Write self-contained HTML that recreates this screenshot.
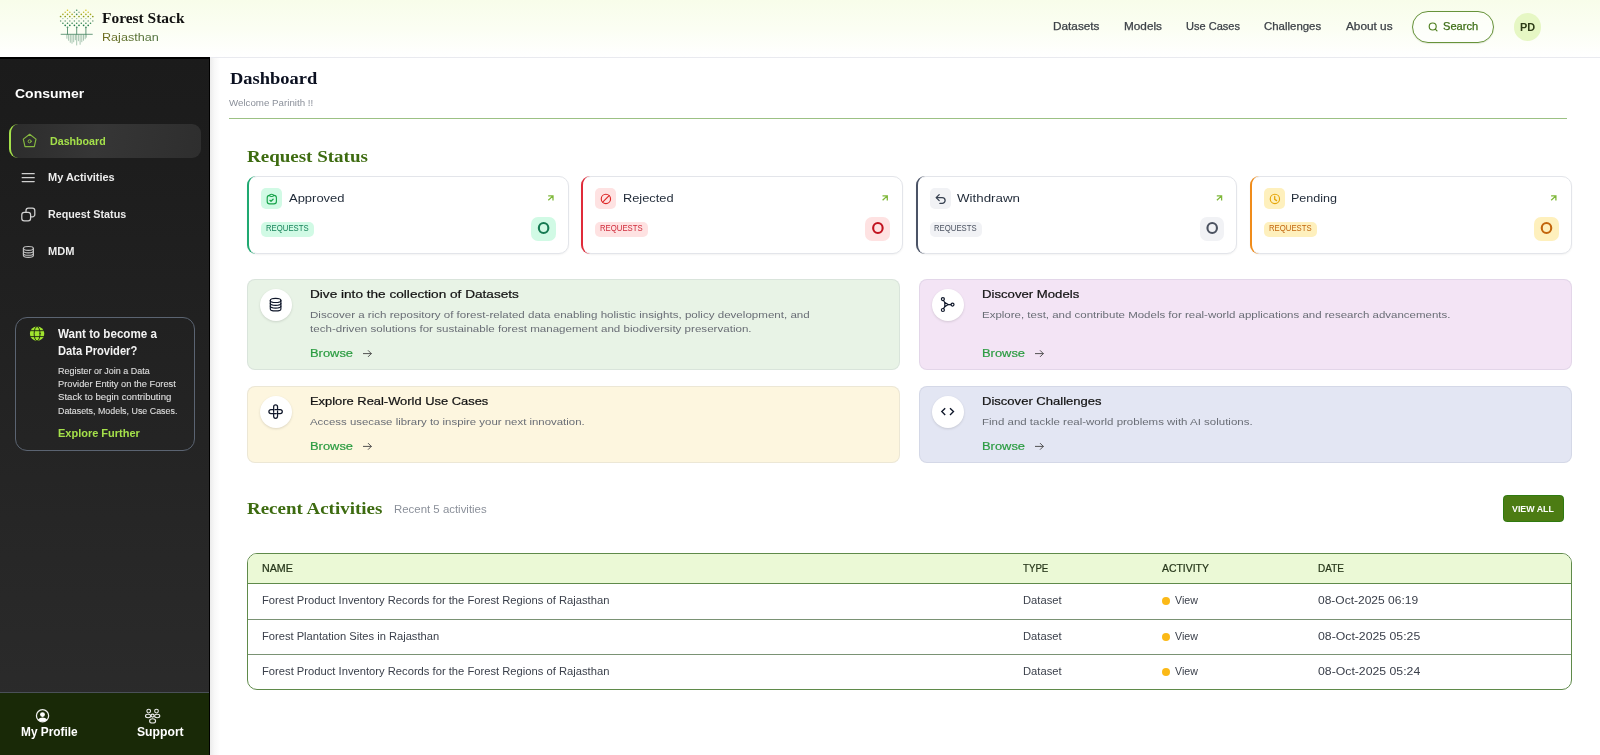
<!DOCTYPE html><html lang="en"><head>
<meta charset="utf-8">
<title>Forest Stack Rajasthan - Dashboard</title>
<style>
*{box-sizing:border-box;margin:0;padding:0}
html,body{width:1600px;height:755px;overflow:hidden;background:#fff}
body{font-family:"Liberation Sans",sans-serif;color:#1f2937;position:relative}
.abs{position:absolute}
.t{position:absolute;white-space:nowrap;line-height:1}
.serif{font-family:"Liberation Serif",serif;font-weight:700}
.b{font-weight:700}
.m{-webkit-text-stroke:.25px currentColor}
svg{position:absolute;overflow:visible}

/* header */
#hdr{position:absolute;left:0;top:0;width:1600px;height:58px;background:linear-gradient(180deg,#f8fdea 0%,#fbfef3 50%,#ffffff 100%);border-bottom:1px solid #e9eaef}
.nav{color:#3d4248}
#search{position:absolute;left:1412px;top:11px;width:82px;height:32px;border:1px solid #67933a;border-radius:16px;background:rgba(255,255,255,.55);box-shadow:0 .5px 1px rgba(80,110,40,.25)}
#avatar{position:absolute;left:1513.5px;top:13px;width:27.5px;height:27.5px;border-radius:14px;background:#e6f7c4}

/* sidebar */
#side{position:absolute;left:0;top:57px;width:210px;height:698px;box-shadow:inset 0 1px 0 #000;background:linear-gradient(180deg,#1b1b1b 0%,#1d1d1d 15%,#2c2c2c 100%);border-top:1px solid #000;border-right:1px solid #000}
#sideshadow{position:absolute;left:210px;top:58px;width:10px;height:697px;background:linear-gradient(90deg,#ececec 0%,#f8f8f8 45%,#fff 100%)}
#act{position:absolute;left:9px;top:124px;width:192px;height:34px;border-radius:9px;background:linear-gradient(100deg,#2c2c2c 0%,#363636 45%,#2e2e2e 100%);border-left:2px solid #a4e04a}
.sn{font-weight:700;color:#ececec}
#prov{position:absolute;left:15px;top:317px;width:180px;height:134px;border:1px solid #5b6472;border-radius:12px}
#foot{position:absolute;left:0;top:692px;width:209px;height:63px;background:#192907;border-top:1.5px solid #4a5058}

/* main */
.card{position:absolute;top:176px;width:321.5px;height:77.5px;background:#fff;border:1px solid #e3e5ea;border-radius:10px;box-shadow:0 1px 2px rgba(0,0,0,.05)}
.card .bar{position:absolute;left:-1px;top:-1px;width:12px;height:77.5px;border-left:2.5px solid;border-radius:9px 0 0 9px}
.ico{position:absolute;left:13px;top:11px;width:21px;height:21px;border-radius:5px}
.pill{position:absolute;left:13px;top:44.600px;height:15px;width:52.5px;border-radius:5px}
.num{position:absolute;left:283.100px;top:39.900px;width:24.700px;height:24px;border-radius:7px}
.info{position:absolute;border-radius:8px;border:1px solid rgba(90,100,130,.1)}
.circ{position:absolute;width:32px;height:32px;border-radius:16px;background:#fff;box-shadow:0 1px 2.5px rgba(0,0,0,.13)}
.it{color:#111;-webkit-text-stroke:.22px #111}
.id{color:#696d75}
.br{color:#2a9b40;-webkit-text-stroke:.2px #2a9b40}
.th{color:#26361a;-webkit-text-stroke:.22px #26361a}
.td{color:#3b404b}
</style>
</head>
<body>

<!-- HEADER -->
<div id="hdr"></div>
<div class="t serif" style="color: rgb(17, 17, 17); left: 102.1px; font-size: 15.3px; top: 10px; transform: scaleX(1.01); transform-origin: 0px 0px;">Forest Stack</div>
<div class="t" style="color: transparent; background: linear-gradient(90deg, rgb(111, 108, 28) 0%, rgb(90, 110, 44) 45%, rgb(76, 111, 60) 100%) text; left: 101.6px; font-size: 11.5px; top: 32px; transform: scaleX(1.096); transform-origin: 0px 0px;">Rajasthan</div>
<div class="t nav m" style="left: 1053.2px; font-size: 10.3px; top: 22px; transform: scaleX(1.144); transform-origin: 0px 0px;">Datasets</div>
<div class="t nav m" style="left: 1124px; font-size: 10.3px; top: 22px; transform: scaleX(1.144); transform-origin: 0px 0px;">Models</div>
<div class="t nav m" style="left: 1185.7px; font-size: 10.3px; top: 22px; transform: scaleX(1.072); transform-origin: 0px 0px;">Use Cases</div>
<div class="t nav m" style="left: 1264px; font-size: 10.3px; top: 22px; transform: scaleX(1.11); transform-origin: 0px 0px;">Challenges</div>
<div class="t nav m" style="left: 1345.6px; font-size: 10.3px; top: 22px; transform: scaleX(1.146); transform-origin: 0px 0px;">About us</div>
<div id="search"></div>
<div class="t m" style="color: rgb(63, 111, 23); left: 1442.5px; font-size: 10.3px; top: 22px; transform: scaleX(1.079); transform-origin: 0px 0px;">Search</div>
<div id="avatar"></div>
<div class="t b" style="color: rgb(45, 59, 22); left: 1519.5px; font-size: 10.6px; top: 22px; transform: scaleX(1.029); transform-origin: 0px 0px;">PD</div>

<!-- SIDEBAR -->
<div id="side"></div>
<div id="sideshadow"></div>
<div class="t b" style="color: rgb(255, 255, 255); left: 15.2px; font-size: 13.4px; top: 87px; transform: scaleX(1.045); transform-origin: 0px 0px;">Consumer</div>
<div id="act"></div>
<div class="t sn" style="color: rgb(164, 224, 74); left: 49.5px; font-size: 11.4px; top: 136px; transform: scaleX(0.936); transform-origin: 0px 0px;">Dashboard</div>
<div class="t sn" style="left: 48px; font-size: 11.4px; top: 172px; transform: scaleX(0.964); transform-origin: 0px 0px;">My Activities</div>
<div class="t sn" style="left: 48px; font-size: 11.4px; top: 209px; transform: scaleX(0.943); transform-origin: 0px 0px;">Request Status</div>
<div class="t sn" style="left: 48px; font-size: 11.4px; top: 246px; transform: scaleX(0.973); transform-origin: 0px 0px;">MDM</div>
<div id="prov"></div>
<div class="t b" style="color: rgb(243, 243, 243); left: 58.1px; font-size: 12.3px; top: 328px; transform: scaleX(0.944); transform-origin: 0px 0px;">Want to become a</div>
<div class="t b" style="color: rgb(243, 243, 243); left: 58.1px; font-size: 12.3px; top: 345px; transform: scaleX(0.906); transform-origin: 0px 0px;">Data Provider?</div>
<div class="t" style="color: rgb(222, 222, 222); -webkit-text-stroke: 0.12px rgb(222, 222, 222); left: 58.1px; font-size: 9.7px; top: 366px; transform: scaleX(0.926); transform-origin: 0px 0px;">Register or Join a Data</div>
<div class="t" style="color: rgb(222, 222, 222); -webkit-text-stroke: 0.12px rgb(222, 222, 222); left: 58.1px; font-size: 9.7px; top: 379px; transform: scaleX(0.96); transform-origin: 0px 0px;">Provider Entity on the Forest</div>
<div class="t" style="color: rgb(222, 222, 222); -webkit-text-stroke: 0.12px rgb(222, 222, 222); left: 58.1px; font-size: 9.7px; top: 392px; transform: scaleX(0.993); transform-origin: 0px 0px;">Stack to begin contributing</div>
<div class="t" style="color: rgb(222, 222, 222); -webkit-text-stroke: 0.12px rgb(222, 222, 222); left: 58.1px; font-size: 9.7px; top: 406px; transform: scaleX(0.916); transform-origin: 0px 0px;">Datasets, Models, Use Cases.</div>
<div class="t b" style="color: rgb(164, 224, 74); left: 58.1px; font-size: 11.7px; top: 427px; transform: scaleX(0.94); transform-origin: 0px 0px;">Explore Further</div>
<div id="foot"></div>
<div class="t b" style="color: rgb(255, 255, 255); left: 21.3px; font-size: 12px; top: 726px; transform: scaleX(0.988); transform-origin: 0px 0px;">My Profile</div>
<div class="t b" style="color: rgb(255, 255, 255); left: 136.9px; font-size: 12px; top: 726px; transform: scaleX(1.015); transform-origin: 0px 0px;">Support</div>

<!-- MAIN -->
<div class="t serif" style="color: rgb(11, 16, 32); left: 229.5px; font-size: 17.6px; top: 70px; transform: scaleX(1.05); transform-origin: 0px 0px;">Dashboard</div>
<div class="t" style="color: rgb(139, 144, 154); left: 229.2px; font-size: 9.7px; top: 98px; transform: scaleX(1.005); transform-origin: 0px 0px;">Welcome Parinith !!</div>
<div class="abs" style="left:229px;top:118px;width:1338px;height:1px;background:#9cc184"></div>
<div class="t serif" style="color: rgb(61, 107, 16); left: 247px; font-size: 17.6px; top: 148px; transform: scaleX(1.08); transform-origin: 0px 0px;">Request Status</div>

<div class="card" style="left:247.1px"><div class="bar" style="border-color:#1fa971"></div><div class="ico" style="background:#d1fae5"></div><div class="pill" style="background:#d1fae5"></div><div class="num" style="background:#d1fae5"></div></div>
<div class="card" style="left:581.4px"><div class="bar" style="border-color:#e02b3a"></div><div class="ico" style="background:#fee2e2"></div><div class="pill" style="background:#fee2e2"></div><div class="num" style="background:#fee2e2"></div></div>
<div class="card" style="left:915.7px"><div class="bar" style="border-color:#4b5366"></div><div class="ico" style="background:#f1f2f5"></div><div class="pill" style="background:#f1f2f5"></div><div class="num" style="background:#f1f2f5"></div></div>
<div class="card" style="left:1250px"><div class="bar" style="border-color:#f08c1a"></div><div class="ico" style="background:#fef0bd"></div><div class="pill" style="background:#fef0bd"></div><div class="num" style="background:#fef0bd"></div></div>

<div class="t" style="color: rgb(31, 41, 55); left: 288.7px; font-size: 11.67px; top: 192px; transform: scaleX(1.113); transform-origin: 0px 0px;">Approved</div>
<div class="t" style="color: rgb(31, 41, 55); left: 622.8px; font-size: 11.67px; top: 192px; transform: scaleX(1.098); transform-origin: 0px 0px;">Rejected</div>
<div class="t" style="color: rgb(31, 41, 55); left: 957.1px; font-size: 11.67px; top: 192px; transform: scaleX(1.145); transform-origin: 0px 0px;">Withdrawn</div>
<div class="t" style="color: rgb(31, 41, 55); left: 1291.3px; font-size: 11.67px; top: 192px; transform: scaleX(1.076); transform-origin: 0px 0px;">Pending</div>

<div class="t" style="color: rgb(23, 131, 90); left: 265.6px; font-size: 8.4px; top: 224px; transform: scaleX(0.925); transform-origin: 0px 0px;">REQUESTS</div>
<div class="t" style="color: rgb(207, 42, 58); left: 600px; font-size: 8.4px; top: 224px; transform: scaleX(0.925); transform-origin: 0px 0px;">REQUESTS</div>
<div class="t" style="color: rgb(75, 82, 96); left: 934.3px; font-size: 8.4px; top: 224px; transform: scaleX(0.925); transform-origin: 0px 0px;">REQUESTS</div>
<div class="t" style="color: rgb(194, 101, 12); left: 1268.6px; font-size: 8.4px; top: 224px; transform: scaleX(0.925); transform-origin: 0px 0px;">REQUESTS</div>


<div class="info" style="left:247px;top:279px;width:652.5px;height:91.300px;background:#e8f3e6"></div>
<div class="info" style="left:919px;top:279px;width:652.700px;height:91.300px;background:#f3e4f5"></div>
<div class="info" style="left:247px;top:385.800px;width:652.500px;height:77px;background:#fdf6df"></div>
<div class="info" style="left:919px;top:385.800px;width:652.700px;height:77px;background:#e3e6f3"></div>
<div class="circ" style="left:259.5px;top:288.5px"></div>
<div class="circ" style="left:931.5px;top:288.5px"></div>
<div class="circ" style="left:259.5px;top:395.5px"></div>
<div class="circ" style="left:931.5px;top:395.5px"></div>

<div class="t it" style="left: 310.2px; font-size: 11.67px; top: 288px; transform: scaleX(1.168); transform-origin: 0px 0px;">Dive into the collection of Datasets</div>
<div class="t id" style="left: 310.2px; font-size: 9.8px; top: 310px; transform: scaleX(1.181); transform-origin: 0px 0px;">Discover a rich repository of forest-related data enabling holistic insights, policy development, and</div>
<div class="t id" style="left: 310.2px; font-size: 9.8px; top: 324px; transform: scaleX(1.182); transform-origin: 0px 0px;">tech-driven solutions for sustainable forest management and biodiversity preservation.</div>
<div class="t br" style="left: 310.2px; font-size: 11.67px; top: 347px; transform: scaleX(1.107); transform-origin: 0px 0px;">Browse</div>

<div class="t it" style="left: 982.2px; font-size: 11.67px; top: 288px; transform: scaleX(1.129); transform-origin: 0px 0px;">Discover Models</div>
<div class="t id" style="left: 982.2px; font-size: 9.8px; top: 310px; transform: scaleX(1.172); transform-origin: 0px 0px;">Explore, test, and contribute Models for real-world applications and research advancements.</div>
<div class="t br" style="left: 982.2px; font-size: 11.67px; top: 347px; transform: scaleX(1.107); transform-origin: 0px 0px;">Browse</div>

<div class="t it" style="left: 310.2px; font-size: 11.67px; top: 395px; transform: scaleX(1.107); transform-origin: 0px 0px;">Explore Real-World Use Cases</div>
<div class="t id" style="left: 310.2px; font-size: 9.8px; top: 417px; transform: scaleX(1.165); transform-origin: 0px 0px;">Access usecase library to inspire your next innovation.</div>
<div class="t br" style="left: 310.2px; font-size: 11.67px; top: 440px; transform: scaleX(1.107); transform-origin: 0px 0px;">Browse</div>

<div class="t it" style="left: 982.2px; font-size: 11.67px; top: 395px; transform: scaleX(1.119); transform-origin: 0px 0px;">Discover Challenges</div>
<div class="t id" style="left: 982.2px; font-size: 9.8px; top: 417px; transform: scaleX(1.172); transform-origin: 0px 0px;">Find and tackle real-world problems with AI solutions.</div>
<div class="t br" style="left: 982.2px; font-size: 11.67px; top: 440px; transform: scaleX(1.107); transform-origin: 0px 0px;">Browse</div>

<div class="t serif" style="color: rgb(61, 107, 16); left: 247.3px; font-size: 17.6px; top: 500px; transform: scaleX(1.078); transform-origin: 0px 0px;">Recent Activities</div>
<div class="t" style="color: rgb(139, 144, 154); left: 393.6px; font-size: 10.2px; top: 505px; transform: scaleX(1.121); transform-origin: 0px 0px;">Recent 5 activities</div>
<div class="abs" style="left:1502.600px;top:495px;width:61.500px;height:27.100px;background:#4c7c13;border-radius:3.800px;border:1px solid #2f7a10"></div>
<div class="t b" style="color: rgb(255, 255, 255); left: 1512.4px; font-size: 9.4px; top: 504px; transform: scaleX(0.941); transform-origin: 0px 0px;">VIEW ALL</div>

<div class="abs" id="tbl" style="left:247px;top:552.5px;width:1324.5px;height:137.5px;border:1px solid #5f8a4a;border-radius:10px;overflow:hidden;background:#fff">
  <div class="abs" style="left:0;top:0;width:1325px;height:30.5px;background:#ebf9d6;border-bottom:1px solid #5f8a4a"></div>
  <div class="abs" style="left:0;top:65px;width:1325px;height:1px;background:#7a9274"></div>
  <div class="abs" style="left:0;top:100.5px;width:1325px;height:1px;background:#7a9274"></div>
</div>
<div class="t th" style="left: 262.3px; font-size: 10.4px; top: 564px; transform: scaleX(1.03); transform-origin: 0px 0px;">NAME</div>
<div class="t th" style="left: 1022.6px; font-size: 10.4px; top: 564px; transform: scaleX(0.934); transform-origin: 0px 0px;">TYPE</div>
<div class="t th" style="left: 1162.3px; font-size: 10.4px; top: 564px; transform: scaleX(1.004); transform-origin: 0px 0px;">ACTIVITY</div>
<div class="t th" style="left: 1318.4px; font-size: 10.4px; top: 564px; transform: scaleX(0.963); transform-origin: 0px 0px;">DATE</div>

<div class="t td" style="left: 262.3px; font-size: 10px; top: 596px; transform: scaleX(1.12); transform-origin: 0px 0px;">Forest Product Inventory Records for the Forest Regions of Rajasthan</div>
<div class="t td" style="left: 1022.6px; font-size: 10px; top: 596px; transform: scaleX(1.119); transform-origin: 0px 0px;">Dataset</div>
<div class="abs" style="left:1162.2px;top:597.2px;width:8.2px;height:8.2px;border-radius:5px;background:#fbb917"></div>
<div class="t td" style="left: 1174.8px; font-size: 10px; top: 596px; transform: scaleX(1.064); transform-origin: 0px 0px;">View</div>
<div class="t td" style="left: 1318.4px; font-size: 10px; top: 596px; transform: scaleX(1.2); transform-origin: 0px 0px;">08-Oct-2025 06:19</div>

<div class="t td" style="left: 262.3px; font-size: 10px; top: 632px; transform: scaleX(1.114); transform-origin: 0px 0px;">Forest Plantation Sites in Rajasthan</div>
<div class="t td" style="left: 1022.6px; font-size: 10px; top: 632px; transform: scaleX(1.119); transform-origin: 0px 0px;">Dataset</div>
<div class="abs" style="left:1162.2px;top:632.8px;width:8.2px;height:8.2px;border-radius:5px;background:#fbb917"></div>
<div class="t td" style="left: 1174.8px; font-size: 10px; top: 632px; transform: scaleX(1.064); transform-origin: 0px 0px;">View</div>
<div class="t td" style="left: 1318.4px; font-size: 10px; top: 632px; transform: scaleX(1.226); transform-origin: 0px 0px;">08-Oct-2025 05:25</div>

<div class="t td" style="left: 262.3px; font-size: 10px; top: 667px; transform: scaleX(1.12); transform-origin: 0px 0px;">Forest Product Inventory Records for the Forest Regions of Rajasthan</div>
<div class="t td" style="left: 1022.6px; font-size: 10px; top: 667px; transform: scaleX(1.119); transform-origin: 0px 0px;">Dataset</div>
<div class="abs" style="left:1162.2px;top:668px;width:8.2px;height:8.2px;border-radius:5px;background:#fbb917"></div>
<div class="t td" style="left: 1174.8px; font-size: 10px; top: 667px; transform: scaleX(1.064); transform-origin: 0px 0px;">View</div>
<div class="t td" style="left: 1318.4px; font-size: 10px; top: 667px; transform: scaleX(1.226); transform-origin: 0px 0px;">08-Oct-2025 05:24</div>

<svg id="icons" width="1600" height="755" viewBox="0 0 1600 755" style="left:0;top:0" fill="none" stroke-linecap="round" stroke-linejoin="round">
<g><circle cx="67.5" cy="10.3" r="0.8" fill="#d8c41c"></circle><circle cx="76.7" cy="10.3" r="0.8" fill="#3f8a62"></circle><circle cx="85.9" cy="10.3" r="0.8" fill="#d8c41c"></circle><circle cx="65.2" cy="12.2" r="0.75" fill="#c4b82c"></circle><circle cx="69.8" cy="12.2" r="0.75" fill="#c4b82c"></circle><circle cx="74.4" cy="12.2" r="0.75" fill="#7aa28a"></circle><circle cx="79.0" cy="12.2" r="0.75" fill="#7aa28a"></circle><circle cx="83.6" cy="12.2" r="0.75" fill="#c4b82c"></circle><circle cx="88.2" cy="12.2" r="0.75" fill="#c4b82c"></circle><circle cx="62.9" cy="14.4" r="0.8" fill="#a6a81e"></circle><circle cx="67.5" cy="14.4" r="0.8" fill="#a6a81e"></circle><circle cx="72.1" cy="14.4" r="0.8" fill="#a6a81e"></circle><circle cx="76.7" cy="14.4" r="0.8" fill="#3f8a62"></circle><circle cx="81.3" cy="14.4" r="0.8" fill="#a6a81e"></circle><circle cx="85.9" cy="14.4" r="0.8" fill="#a6a81e"></circle><circle cx="90.5" cy="14.4" r="0.8" fill="#a6a81e"></circle><circle cx="60.6" cy="16.5" r="0.85" fill="#8a9c18"></circle><circle cx="65.2" cy="16.5" r="0.85" fill="#8a9c18"></circle><circle cx="69.8" cy="16.5" r="0.85" fill="#8a9c18"></circle><circle cx="74.4" cy="16.5" r="0.85" fill="#8a9c18"></circle><circle cx="79.0" cy="16.5" r="0.85" fill="#8a9c18"></circle><circle cx="83.6" cy="16.5" r="0.85" fill="#8a9c18"></circle><circle cx="88.2" cy="16.5" r="0.85" fill="#8a9c18"></circle><circle cx="92.8" cy="16.5" r="0.85" fill="#8a9c18"></circle><circle cx="62.9" cy="18.6" r="0.65" fill="#8fb09a"></circle><circle cx="67.5" cy="18.6" r="0.65" fill="#8fb09a"></circle><circle cx="72.1" cy="18.6" r="0.65" fill="#8fb09a"></circle><circle cx="76.7" cy="18.6" r="0.65" fill="#8fb09a"></circle><circle cx="81.3" cy="18.6" r="0.65" fill="#8fb09a"></circle><circle cx="85.9" cy="18.6" r="0.65" fill="#8fb09a"></circle><circle cx="90.5" cy="18.6" r="0.65" fill="#8fb09a"></circle><circle cx="60.6" cy="20.9" r="0.75" fill="#6a987a"></circle><circle cx="65.2" cy="20.9" r="0.75" fill="#6a987a"></circle><circle cx="69.8" cy="20.9" r="0.75" fill="#6a987a"></circle><circle cx="74.4" cy="20.9" r="0.75" fill="#6a987a"></circle><circle cx="79.0" cy="20.9" r="0.75" fill="#6a987a"></circle><circle cx="83.6" cy="20.9" r="0.75" fill="#6a987a"></circle><circle cx="88.2" cy="20.9" r="0.75" fill="#6a987a"></circle><circle cx="92.8" cy="20.9" r="0.75" fill="#6a987a"></circle><circle cx="62.9" cy="23.3" r="0.8" fill="#2f8452"></circle><circle cx="67.5" cy="23.3" r="0.8" fill="#2f8452"></circle><circle cx="72.1" cy="23.3" r="0.8" fill="#2f8452"></circle><circle cx="76.7" cy="23.3" r="0.8" fill="#2f8452"></circle><circle cx="81.3" cy="23.3" r="0.8" fill="#2f8452"></circle><circle cx="85.9" cy="23.3" r="0.8" fill="#2f8452"></circle><circle cx="90.5" cy="23.3" r="0.8" fill="#2f8452"></circle><circle cx="65.2" cy="25.3" r="0.85" fill="#1f7c4a"></circle><circle cx="69.8" cy="25.3" r="0.85" fill="#1f7c4a"></circle><circle cx="74.4" cy="25.3" r="0.85" fill="#1f7c4a"></circle><circle cx="79.0" cy="25.3" r="0.85" fill="#1f7c4a"></circle><circle cx="83.6" cy="25.3" r="0.85" fill="#1f7c4a"></circle><circle cx="88.2" cy="25.3" r="0.85" fill="#1f7c4a"></circle><circle cx="67.5" cy="27.4" r="0.8" fill="#2f7c52"></circle><circle cx="76.7" cy="27.4" r="0.8" fill="#2f7c52"></circle><circle cx="85.9" cy="27.4" r="0.8" fill="#2f7c52"></circle><path d="M67.5 27.4V34.3M76.7 27.4V34.3M85.9 27.4V34.3" stroke="#5a9272" stroke-width="0.950"></path><path d="M61.100 34.300H92.300" stroke="#5a9272" stroke-width="0.900"></path><path d="M66.9 34.8V38.3" stroke="#4f8a68" stroke-width="0.9" opacity="0.55"></path><path d="M68.6 34.8V40.3" stroke="#4f8a68" stroke-width="0.9" opacity="0.55"></path><path d="M70.3 34.8V42.3" stroke="#4f8a68" stroke-width="0.9" opacity="0.55"></path><path d="M72.0 34.8V43.3" stroke="#4f8a68" stroke-width="0.9" opacity="0.55"></path><path d="M73.7 34.8V41.8" stroke="#4f8a68" stroke-width="0.9" opacity="0.55"></path><path d="M75.4 34.8V39.8" stroke="#4f8a68" stroke-width="0.9" opacity="0.55"></path><path d="M76.7 34.8V45.0" stroke="#4f8a68" stroke-width="0.9" opacity="0.55"></path><path d="M78.4 34.8V40.8" stroke="#4f8a68" stroke-width="0.9" opacity="0.55"></path><path d="M80.1 34.8V44.3" stroke="#4f8a68" stroke-width="0.9" opacity="0.55"></path><path d="M81.8 34.8V41.8" stroke="#4f8a68" stroke-width="0.9" opacity="0.55"></path><path d="M83.5 34.8V40.3" stroke="#4f8a68" stroke-width="0.9" opacity="0.55"></path><path d="M85.2 34.8V38.8" stroke="#4f8a68" stroke-width="0.9" opacity="0.55"></path><path d="M86.3 34.8V37.3" stroke="#4f8a68" stroke-width="0.9" opacity="0.55"></path></g>
<!-- search icon -->
<circle cx="1432.7" cy="26.5" r="3.5" stroke="#4f7f1f" stroke-width="1.15"></circle><path d="M1435.3 29.1L1437 30.9" stroke="#4f7f1f" stroke-width="1.15"></path>
<!-- sidebar icons -->
<path d="M29.65 134.3L36 139.1L34.3 146.6H25L23.3 139.1Z" stroke="#86b940" stroke-width="1.15"></path><circle cx="29.65" cy="141.3" r="1.55" stroke="#86b940" stroke-width="1"></circle>
<path d="M22.2 173.7H34.2M22.2 177.7H34.2M22.2 181.6H34.2" stroke="#cfcfcf" stroke-width="1.3"></path>
<rect x="21.8" y="212.3" width="8.8" height="8.6" rx="2.4" stroke="#d2d2d2" stroke-width="1.25"></rect>
<path d="M26 211.8V210.4a2.4 2.4 0 0 1 2.4-2.4h4a2.4 2.4 0 0 1 2.4 2.4v4a2.4 2.4 0 0 1-2.4 2.4h-1.5" stroke="#d2d2d2" stroke-width="1.25"></path>
<g stroke="#c2c2c2" stroke-width="1.150"><ellipse cx="28.4" cy="248.4" rx="5" ry="1.9"></ellipse><path d="M23.4 248.4V255.4c0 1 2.2 1.9 5 1.9s5-.9 5-1.9V248.4"></path><path d="M23.4 251c0 1 2.2 1.9 5 1.9s5-.9 5-1.9M23.4 253.4c0 1 2.2 1.9 5 1.9s5-.9 5-1.9"></path></g>
<!-- globe -->
<circle cx="37.1" cy="333.7" r="7.2" fill="#a1e42f"></circle>
<path d="M29.900 330.700H44.300M29.900 336.600H44.300" stroke="#222b14" stroke-width="0.950"></path><ellipse cx="37.100" cy="333.700" rx="2.950" ry="7.200" stroke="#222b14" stroke-width="0.950"></ellipse>
<!-- profile -->
<circle cx="42.55" cy="715.8" r="6.1" stroke="#f0f0f0" stroke-width="1.25"></circle><circle cx="42.5" cy="714.6" r="2.45" fill="#fff"></circle><path d="M37.9 719.4a6.6 6.6 0 0 1 9.3 0a6 6 0 0 1-9.3 0Z" fill="#fff"></path>
<!-- support -->
<g stroke="#ececec" stroke-width="1.1"><circle cx="148.7" cy="711.1" r="1.85"></circle><circle cx="156.5" cy="711.1" r="1.85"></circle><ellipse cx="148.1" cy="716" rx="2.6" ry="1.7"></ellipse><ellipse cx="157.2" cy="716" rx="2.6" ry="1.7"></ellipse><circle cx="152.6" cy="715.6" r="1.5" fill="#192907"></circle><ellipse cx="152.6" cy="720.9" rx="3" ry="2.1" fill="#192907"></ellipse></g>

<!-- status card icons -->
<g stroke="#16a34a" stroke-width="1.15"><rect x="267.2" y="195.4" width="9.2" height="8.5" rx="2.4"></rect><ellipse cx="271.6" cy="195.4" rx="1.9" ry="1.1" fill="#d1fae5"></ellipse><path d="M269.9 200.3L271 201.3L273.1 199.2" stroke-width="1.25"></path></g>
<g stroke="#dc2626" stroke-width="1.15"><circle cx="605.9" cy="198.9" r="4.65"></circle><path d="M602.7 202.2L609.1 195.6"></path></g>
<g stroke="#374151" stroke-width="1.3"><path d="M939.2 194.6L936.2 197.6L939.2 200.6"></path><path d="M936.5 197.6H942.2a2.9 2.9 0 0 1 0 5.8H939.9"></path></g>
<g stroke="#e5a50a" stroke-width="1.15"><circle cx="1274.9" cy="198.9" r="4.65"></circle><path d="M1274.7 196.4V199.4L1276.6 200.6" stroke-width="1.3"></path></g>

<!-- zero counts -->
<ellipse cx="543.6" cy="228" rx="4.750" ry="5.050" stroke="#157a52" stroke-width="2.100"></ellipse><ellipse cx="877.9" cy="228" rx="4.750" ry="5.050" stroke="#c1121f" stroke-width="2.100"></ellipse><ellipse cx="1212.2" cy="228" rx="4.750" ry="5.050" stroke="#4b5260" stroke-width="2.100"></ellipse><ellipse cx="1546.5" cy="228" rx="4.750" ry="5.050" stroke="#c2650c" stroke-width="2.100"></ellipse>
<!-- card arrows -->
<g stroke="#7fb83a" stroke-width="1.3" stroke-linecap="butt" stroke-linejoin="miter"><path d="M548.3 200.3L553 195.9M548.2 195.9H553V200.4"></path><path d="M882.6 200.3L887.3 195.9M882.5 195.9H887.3V200.4"></path><path d="M1216.9 200.3L1221.6 195.9M1216.8 195.9H1221.6V200.4"></path><path d="M1551.2 200.3L1555.9 195.9M1551.1 195.9H1555.9V200.4"></path></g>

<!-- info icons -->
<g stroke="#0f172a" stroke-width="1.150"><ellipse cx="275.600" cy="300.400" rx="5.300" ry="2.050"></ellipse><path d="M270.300 300.400V308.900c0 1.150 2.400 2.050 5.300 2.050s5.300-.9 5.300-2.050V300.400"></path><path d="M270.300 303.300c0 1.150 2.400 2.050 5.300 2.050s5.300-.9 5.300-2.050M270.300 306.100c0 1.150 2.400 2.050 5.300 2.050s5.300-.9 5.300-2.050"></path></g>
<g stroke="#0f172a" stroke-width="1.2"><circle cx="942.9" cy="299.1" r="1.5"></circle><circle cx="942.9" cy="310" r="1.5"></circle><circle cx="952.5" cy="304.6" r="1.5"></circle><path d="M944.8 302.500V306.700L948.2 304.600Z"></path><path d="M943.500 300.500L944.800 302.500M943.500 308.600L944.800 306.700M948.200 304.600H951"></path></g>
<g stroke="#0f172a" stroke-width="1.250"><path d="M273.65 412.30V406.85a1.95 1.95 0 0 1 3.9 0V409.35"></path><path d="M274.90 409.65H280.35a1.95 1.95 0 0 1 0 3.9H277.85"></path><path d="M277.55 410.90V416.35a1.95 1.95 0 0 1 -3.9 0V413.85"></path><path d="M276.30 413.55H270.85a1.95 1.95 0 0 1 0 -3.9H273.35"></path></g>
<g stroke="#0f172a" stroke-width="1.350" stroke-linecap="butt" stroke-linejoin="miter"><path d="M945.200 408.200L941.800 411.600L945.200 415"></path><path d="M950 408.200L953.500 411.600L950 415"></path></g>

<!-- browse arrows -->
<g stroke="#4a4a4a" stroke-width="0.950"><path d="M363.400 353.600H371.200M368.300 350.600L371.300 353.600L368.300 356.600"></path><path d="M1035.400 353.600H1043.200M1040.300 350.600L1043.300 353.600L1040.300 356.600"></path><path d="M363.400 446.400H371.200M368.300 443.400L371.300 446.400L368.300 449.400"></path><path d="M1035.400 446.400H1043.200M1040.300 443.400L1043.300 446.400L1040.300 449.400"></path></g>
</svg>



</body></html>
